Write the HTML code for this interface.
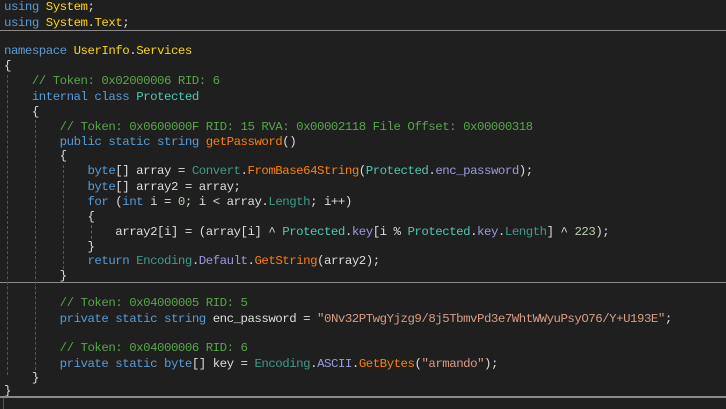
<!DOCTYPE html>
<html><head><meta charset="utf-8"><style>
body{margin:0;width:726px;height:409px;background:#1f1f1f;overflow:hidden;position:relative;font-family:"Liberation Mono",monospace;font-size:12.4px;letter-spacing:-0.48px;color:#dcdcdc}
.l{position:absolute;left:4px;height:15px;line-height:15px;white-space:pre}
.k{color:#569cd6}.t{color:#4ec9b0}.t2{color:#3e9c89}.n{color:#ffd700}.m{color:#ff8000}.c{color:#57a64a}.s{color:#d69d85}.f{color:#9b9bdf}.p{color:#b5cea8}
.sep{position:absolute;left:0;width:726px;height:1px;background:#8a8a8a}
.g{position:absolute;width:0;border-left:1px dashed}
</style></head><body>
<div class="l" style="top:0px"><span class="k">using</span> <span class="n">System</span>;</div>
<div class="l" style="top:15.5px"><span class="k">using</span> <span class="n">System</span>.<span class="n">Text</span>;</div>
<div class="sep" style="top:30px"></div>
<div class="l" style="top:44px"><span class="k">namespace</span> <span class="n">UserInfo</span>.<span class="n">Services</span></div>
<div class="l" style="top:59px">{</div>
<div class="l" style="top:74px">    <span class="c">// Token: 0x02000006 RID: 6</span></div>
<div class="l" style="top:89.5px">    <span class="k">internal class</span> <span class="t">Protected</span></div>
<div class="l" style="top:104.5px">    {</div>
<div class="l" style="top:119.5px">        <span class="c">// Token: 0x0600000F RID: 15 RVA: 0x00002118 File Offset: 0x00000318</span></div>
<div class="l" style="top:134.5px">        <span class="k">public static string</span> <span class="m">getPassword</span>()</div>
<div class="l" style="top:149px">        {</div>
<div class="l" style="top:164px">            <span class="k">byte</span>[] array = <span class="t2">Convert</span>.<span class="m">FromBase64String</span>(<span class="t">Protected</span>.<span class="f">enc_password</span>);</div>
<div class="l" style="top:179.5px">            <span class="k">byte</span>[] array2 = array;</div>
<div class="l" style="top:195px">            <span class="k">for</span> (<span class="k">int</span> i = <span class="p">0</span>; i &lt; array.<span class="t2">Length</span>; i++)</div>
<div class="l" style="top:210px">            {</div>
<div class="l" style="top:224.5px">                array2[i] = (array[i] ^ <span class="t">Protected</span>.<span class="f">key</span>[i % <span class="t">Protected</span>.<span class="f">key</span>.<span class="t2">Length</span>] ^ <span class="p">223</span>);</div>
<div class="l" style="top:239.5px">            }</div>
<div class="l" style="top:254px">            <span class="k">return</span> <span class="t2">Encoding</span>.<span class="f">Default</span>.<span class="m">GetString</span>(array2);</div>
<div class="l" style="top:268.5px">        }</div>
<div class="sep" style="top:282px"></div>
<div class="l" style="top:295.5px">        <span class="c">// Token: 0x04000005 RID: 5</span></div>
<div class="l" style="top:311.5px">        <span class="k">private static string</span> enc_password = <span class="s">"0Nv32PTwgYjzg9/8j5TbmvPd3e7WhtWWyuPsyO76/Y+U193E"</span>;</div>
<div class="l" style="top:340.5px">        <span class="c">// Token: 0x04000006 RID: 6</span></div>
<div class="l" style="top:356.5px">        <span class="k">private static byte</span>[] key = <span class="t2">Encoding</span>.<span class="f">ASCII</span>.<span class="m">GetBytes</span>(<span class="s">"armando"</span>);</div>
<div class="l" style="top:370.5px">    }</div>
<div class="l" style="top:383.5px">}</div>
<div class="g" style="left:7px;top:75px;height:300px;border-color:#555"></div>
<div class="g" style="left:35px;top:120px;height:250px;border-color:#2e6b5e"></div>
<div class="g" style="left:63px;top:165px;height:104px;border-color:#2f5f8a"></div>
<div class="g" style="left:91px;top:225px;height:14px;border-color:#7a4fa0"></div>
<div style="position:absolute;left:0;top:396px;width:726px;height:2px;background:#8a8a8a"></div>
<div style="position:absolute;left:3px;top:398px;width:1px;height:11px;background:#555"></div>
</body></html>
